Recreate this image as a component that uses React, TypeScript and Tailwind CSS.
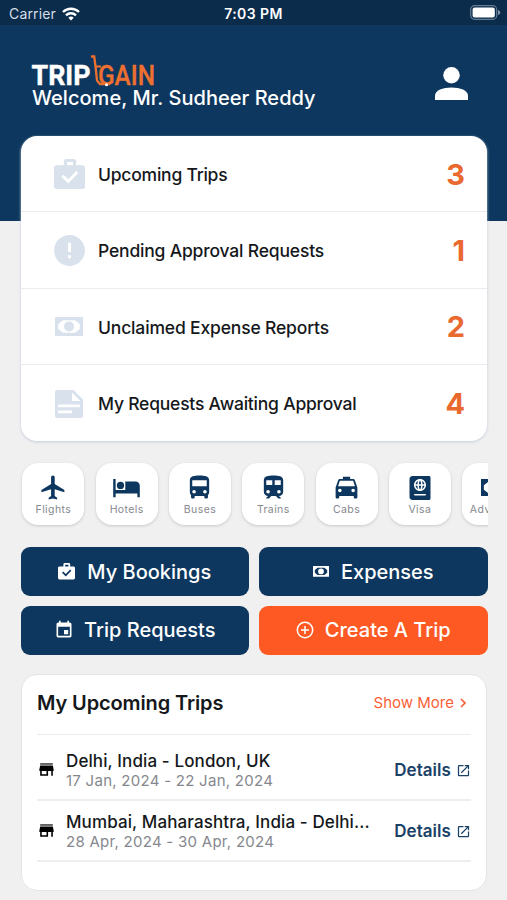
import React from "react";
import { MdError, MdEvent, MdFlight, MdOutlineOpenInNew } from "react-icons/md";
import { FaPassport } from "react-icons/fa";

interface IconProp {
	className?: string;
}

const BagIcon = ({ className }: IconProp) => (
	<svg viewBox="0 0 30 29" className={className} fill="currentColor">
		<path
			fillRule="evenodd"
			d="M12 0h7a2.500 2.500 0 0 1 2.500 2.500V6H28a2.500 2.500 0 0 1 2 2.500v18a2.500 2.500 0 0 1-2.500 2.500h-25A2.500 2.500 0 0 1 0 26.500v-18A2.500 2.500 0 0 1 2.500 6h7V2.500A2.500 2.500 0 0 1 12 0Zm.6 3v3h5.800V3ZM9.200 15.200l-2.100 2.100 6.700 6.500 9.700-10.200-2-2.100-7.700 8.100Z"
		/>
	</svg>
);

const CashIcon = ({ className }: IconProp) => (
	<svg viewBox="0 0 28 19" className={className} fill="currentColor">
		<path fillRule="evenodd" d="M0 0h28v19H0ZM8 3.200 3.200 7v5L8 15.800h12l4.800-3.800V7L20 3.200Z" />
		<circle cx="14" cy="9.500" r="5" />
	</svg>
);

const DocumentIcon = ({ className }: IconProp) => (
	<svg viewBox="0 0 28 28" className={className} fill="currentColor">
		<path
			fillRule="evenodd"
			d="M2 0h16.500L28 9.500V26a2 2 0 0 1-2 2H2a2 2 0 0 1-2-2V2a2 2 0 0 1 2-2Zm15 2.500V11h8.500ZM3 14.500v2.700h22v-2.700Zm0 6v2.700h14v-2.700Z"
		/>
	</svg>
);

const PersonIcon = ({ className }: IconProp) => (
	<svg viewBox="0 0 34 34" className={className} fill="currentColor">
		<circle cx="17" cy="8.500" r="8.500" />
		<path d="M0 34v-4.500C0 24 8 21 17 21s17 3 17 8.500V34Z" />
	</svg>
);

const HotelIcon = ({ className }: IconProp) => (
	<svg viewBox="0 0 24 24" className={className} fill="currentColor">
		<circle cx="7" cy="10.300" r="3" />
		<path d="M19.500 7H11v7H3V5H1v15h2v-3h18v3h2v-9.500A3.500 3.500 0 0 0 19.500 7Z" />
	</svg>
);

const BusIcon = ({ className }: IconProp) => (
	<svg viewBox="0 0 24 24" className={className} fill="currentColor">
		<path
			fillRule="evenodd"
			d="M4 16c0 .9.400 1.700 1 2.200V20a1 1 0 0 0 1 1h1a1 1 0 0 0 1-1v-1h8v1a1 1 0 0 0 1 1h1a1 1 0 0 0 1-1v-1.800c.6-.5 1-1.300 1-2.200V6c0-3.500-3.600-4-8-4s-8 .5-8 4ZM7.500 17a1.500 1.500 0 1 1 0-3 1.500 1.500 0 0 1 0 3Zm9 0a1.500 1.500 0 1 1 0-3 1.500 1.500 0 0 1 0 3ZM18 11H6V6h12Z"
		/>
	</svg>
);

const TrainIcon = ({ className }: IconProp) => (
	<svg viewBox="0 0 24 24" className={className} fill="currentColor">
		<path
			fillRule="evenodd"
			d="M12 2c-4.400 0-8 .5-8 4v9.500A3.500 3.500 0 0 0 7.500 19L6 20.500v.5h2.200l2-2H14l2 2h2v-.5L16.500 19a3.500 3.500 0 0 0 3.500-3.500V6c0-3.500-3.600-4-8-4ZM7.500 17a1.500 1.500 0 1 1 0-3 1.500 1.500 0 0 1 0 3ZM11 10H6V6h5Zm5.500 7a1.500 1.500 0 1 1 0-3 1.500 1.500 0 0 1 0 3ZM18 10h-5V6h5Z"
		/>
	</svg>
);

const TaxiIcon = ({ className }: IconProp) => (
	<svg viewBox="0 0 24 24" className={className} fill="currentColor">
		<path
			fillRule="evenodd"
			d="M18.920 6A1.500 1.500 0 0 0 17.500 5H15V3H9v2H6.500a1.500 1.500 0 0 0-1.420 1L3 12v8a1 1 0 0 0 1 1h1a1 1 0 0 0 1-1v-1h12v1a1 1 0 0 0 1 1h1a1 1 0 0 0 1-1v-8ZM6.500 16a1.500 1.500 0 1 1 0-3 1.500 1.500 0 0 1 0 3Zm11 0a1.500 1.500 0 1 1 0-3 1.500 1.500 0 0 1 0 3ZM5 11l1.500-4.500h11L19 11Z"
		/>
	</svg>
);

const StoreIcon = ({ className }: IconProp) => (
	<svg viewBox="0 0 24 24" className={className} fill="currentColor">
		<path d="M20 4H4v2h16Z" opacity=".75" />
		<path fillRule="evenodd" d="M21 14v-2l-1-5H4l-1 5v2h1v6h10v-6h4v6h2v-6Zm-9 4H6v-4h6Z" />
	</svg>
);

const PlusCircleIcon = ({ className }: IconProp) => (
	<svg viewBox="0 0 18 18" className={className} fill="none" stroke="currentColor" strokeWidth="1.500">
		<circle cx="9" cy="9" r="7.700" />
		<path d="M9 5v8M5 9h8" />
	</svg>
);

const WifiIcon = ({ className }: IconProp) => (
	<svg viewBox="0 0 18 14" className={className} fill="none" stroke="currentColor" strokeWidth="2.400">
		<path d="M1 5a11.500 11.500 0 0 1 16 0M4 8.300a7.200 7.200 0 0 1 10 0" />
		<path d="M6.300 10.800a4 4 0 0 1 5.400 0L9 13.500Z" fill="currentColor" stroke="none" />
	</svg>
);

const BatteryIcon = ({ className }: IconProp) => (
	<svg viewBox="0 0 31 15" className={className}>
		<rect x=".7" y=".7" width="26" height="13.600" rx="3.800" fill="none" stroke="#657d93" strokeWidth="1.200" />
		<rect x="2.600" y="2.600" width="22.200" height="9.800" rx="2" fill="white" />
		<path d="M28 5c3 .8 3 4.200 0 5Z" fill="#8296a9" />
	</svg>
);

const Logo = () => (
	<svg viewBox="0 0 124 32" className="h-8 w-[124px] overflow-visible" fontFamily="Roboto, sans-serif" fontWeight="700">
		<text x="-.5" y="30" fontSize="28.500" textLength="59" lengthAdjust="spacingAndGlyphs" fill="white" stroke="white" strokeWidth=".4">
			TRIP
		</text>
		<g fill="#ee7030" stroke="#ee7030">
			<text x="66" y="30" fontSize="28" fontWeight="500" textLength="57" lengthAdjust="spacingAndGlyphs" strokeWidth=".3">
				GAIN
			</text>
			<path d="M59 1.500h3.200l1.500 11.500 1.300 12.500 3 3.500h10" fill="none" strokeWidth="2.300" />
			<path d="M64 11.500h5" fill="none" strokeWidth="2" />
		</g>
		<circle cx="74.500" cy="29.700" r="1.500" fill="white" />
	</svg>
);

const summary = [
	{ text: "Upcoming Trips", number: 3, icon: <BagIcon className="w-[31px]" />, spacing: "tracking-[-0.22px]" },
	{ text: "Pending Approval Requests", number: 1, icon: <MdError className="size-[37px] shrink-0" />, spacing: "tracking-[-0.18px]" },
	{ text: "Unclaimed Expense Reports", number: 2, icon: <CashIcon className="w-7" />, spacing: "tracking-[-0.16px]" },
	{ text: "My Requests Awaiting Approval", number: 4, icon: <DocumentIcon className="w-7" />, spacing: "tracking-[-0.21px]" },
];

const services = [
	{ text: "Flights", icon: <MdFlight className="size-[29px]" /> },
	{ text: "Hotels", icon: <HotelIcon className="size-[29px]" /> },
	{ text: "Buses", icon: <BusIcon className="size-[29px]" /> },
	{ text: "Trains", icon: <TrainIcon className="size-[29px]" /> },
	{ text: "Cabs", icon: <TaxiIcon className="size-[29px]" /> },
	{ text: "Visa", icon: <FaPassport className="size-[24px]" /> },
	{ text: "Advance", icon: <CashIcon className="w-[25px]" /> },
];

const trips = [
	{ route: "Delhi, India - London, UK", dates: "17 Jan, 2024 - 22 Jan, 2024" },
	{ route: "Mumbai, Maharashtra, India - Delhi...", dates: "28 Apr, 2024 - 30 Apr, 2024" },
];

interface ButtonProp {
	text: string;
	icon: React.ReactNode;
	color?: string;
}

const ActionButton = ({ text, icon, color = "bg-[#0d375e]" }: ButtonProp) => (
	<button className={`flex h-[49px] items-center justify-center rounded-[9px] text-[20px] font-medium text-white ${color}`}>
		{icon}
		<span>{text}</span>
	</button>
);

const App = () => {
	return (
		<div className="h-[900px] w-[507px] overflow-hidden bg-[#f0f0f1] font-['Inter',sans-serif] text-[#15181b]">
			<div className="grid h-[25px] grid-cols-3 items-center bg-[#0b2c4b] text-[14px] text-white">
				<div className="flex items-center gap-[6px] pt-[2px] pl-[9px] text-[#d5dfe8]">
					<span className="tracking-[0.15px]">Carrier</span>
					<WifiIcon className="w-[18px] text-white" />
				</div>
				<span className="pt-[2px] text-center font-semibold tracking-[0.4px]">7:03 PM</span>
				<BatteryIcon className="mr-[6px] w-[31px] justify-self-end" />
			</div>

			<header className="flex h-[196px] items-start justify-between bg-[#0d375e] pr-[39px] pl-8 text-white">
				<div className="flex flex-col pt-[30px]">
					<Logo />
					<p className="-mt-[1px] text-[20px] leading-6 font-medium tracking-[0.03px] whitespace-nowrap">Welcome, Mr. Sudheer Reddy</p>
				</div>
				<PersonIcon className="mt-[42px] w-[33px]" />
			</header>

			<section className="relative -mt-[85px] ml-[21px] h-[305px] w-[466px] rounded-[16px] bg-white shadow-[0_1px_3px_#c5ccd8]">
				{summary.map((item) => (
					<div key={item.text} className="flex h-[76.3px] items-center border-b border-[#ebecef] pt-px pr-[22px] pl-[29px] last:border-0">
						<div className="flex w-[38px] justify-center text-[#d8e1ec]">{item.icon}</div>
						<p className={`ml-[10px] flex-1 pt-[2px] text-[17.5px] font-medium ${item.spacing}`}>{item.text}</p>
						<span className="pt-px text-[29px] font-bold text-[#ea692f]">{item.number}</span>
					</div>
				))}
			</section>

			<nav className="mr-[19px] flex gap-[11.3px] overflow-hidden pt-[22px] pb-[8px] pl-[22.4px]">
				{services.map((item) => (
					<div key={item.text} className="flex h-[62px] w-[62px] shrink-0 flex-col items-center rounded-[16px] bg-white text-[#0d375e] shadow-[0_1px_3px_#c8c8cb]">
						<div className="mt-[9px] flex h-[31px] items-center">{item.icon}</div>
						<span className="text-[10.5px] leading-[14px] tracking-[0.4px] text-[#85888e]">{item.text}</span>
					</div>
				))}
			</nav>

			<div className="mt-[14px] ml-[20.5px] grid w-[467px] grid-cols-2 gap-x-[10px] gap-y-[9.5px]">
				<ActionButton text="My Bookings" icon={<BagIcon className="mr-3 w-[17px]" />} />
				<ActionButton text="Expenses" icon={<CashIcon className="mr-3 w-4" />} />
				<ActionButton text="Trip Requests" icon={<MdEvent className="mr-[10px] size-5" />} />
				<ActionButton text="Create A Trip" color="bg-[#ff5923]" icon={<PlusCircleIcon className="mr-[11px] w-[18px]" />} />
			</div>

			<section className="mt-[19.5px] ml-[21px] h-[217px] w-[466px] rounded-[16px] border border-[#e1e4e9] bg-white px-[15px]">
				<div className="flex h-[60px] items-center justify-between border-b border-[#e9ebee] pb-[3px]">
					<h2 className="text-[20px] font-semibold tracking-[-0.12px]">My Upcoming Trips</h2>
					<a className="flex items-center text-[15px] text-[#fa6136]">
						Show More
						<svg viewBox="0 0 6 10" className="mr-[5px] ml-[6px] w-[6px]" fill="none" stroke="currentColor" strokeWidth="1.700">
							<path d="m1 1 4 4-4 4" />
						</svg>
					</a>
				</div>
				{trips.map((trip) => (
					<div key={trip.route} className="flex h-[61px] items-center border-b-2 border-[#eceef0] pt-[2px] nth-2:h-[66px] nth-2:pt-[7px]">
						<StoreIcon className="-mt-[2px] size-[19px] text-black" />
						<div className="ml-[10px] flex-1 whitespace-nowrap">
							<p className="text-[17px] leading-5 font-medium tracking-[0.11px]">{trip.route}</p>
							<p className="text-[15px] leading-5 tracking-[0.27px] text-[#85888e]">{trip.dates}</p>
						</div>
						<a className="flex items-center gap-[5px] text-[17px] font-semibold tracking-[0.05px] text-[#1a4267]">
							Details
							<MdOutlineOpenInNew className="size-[15px]" />
						</a>
					</div>
				))}
			</section>
		</div>
	);
};

export default App;
